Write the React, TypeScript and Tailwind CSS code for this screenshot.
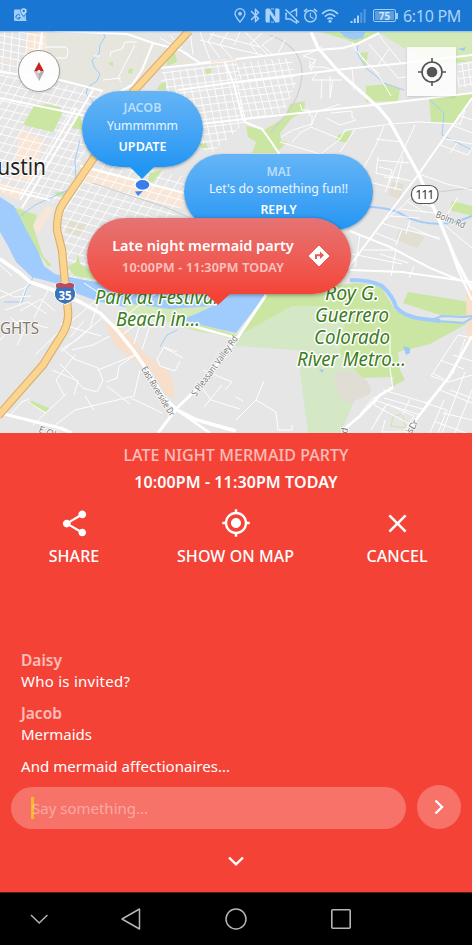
import type { ReactNode } from 'react';
import { MdBluetooth, MdAccessAlarm, MdShare, MdGpsFixed, MdClose } from 'react-icons/md';

type GridProps = {
  id: string;
  area: string;
  x: number;
  y: number;
  u: [number, number];
  v: [number, number];
  nu: number;
  nv: number;
  w?: number;
};

/* Street grid: two families of parallel roads clipped to a neighbourhood */
function StreetGrid({ id, area, x, y, u, v, nu, nv, w = 1 }: GridProps) {
  const lines: string[] = [];
  for (let i = 0; i <= nu; i++) lines.push(`M${x + u[0] * i} ${y + u[1] * i}l${v[0] * nv} ${v[1] * nv}`);
  for (let j = 0; j <= nv; j++) lines.push(`M${x + v[0] * j} ${y + v[1] * j}l${u[0] * nu} ${u[1] * nu}`);
  return (
    <g>
      <clipPath id={id}>
        <path d={area} />
      </clipPath>
      <path clipPath={`url(#${id})`} d={lines.join('')} stroke="#fff" strokeWidth={w} strokeOpacity=".9" fill="none" />
    </g>
  );
}

const PARKS = [
  'M23 125L35 104L43 105L46 104L60 107L63 112L53 132Z',
  'M71 128L79 112L84 130Z',
  'M160 84L166 82V90H157ZM167 60L175 52L177 62L167 66ZM205 69L211 68L212 73L206 74Z',
  'M108 63L113 62L113 67ZM128 70L133 68L132 74L128 73Z',
  'M320 32H378L372 36L356 44L345 39Z',
  'M388 32H472V61L441 64L420 55L404 46Z',
  'M366 86L387 84L400 89L398 101L366 102Z',
  'M429 99L463 93L472 92V98L454 123L431 122Z',
  'M360 53L368 52L366 66L364 65Z',
  'M246 126L264 130L284 118L290 104L305 101L304 112L292 118L280 133L281 141L287 142L276 153H252L256 142L248 137Z',
  'M338 135L352 130L347 143L336 140Z',
  'M13 207L37 215L33 226L43 256L52 266H48L38 252L26 229Z',
  'M78 253L76 262L67 267L75 276L110 282L80 264ZM55 192L67 191L64 196H56Z',
  'M28 403L32 401L49 408L46 413Z',
  'M150 173L163 169L153 182L147 181ZM200 144L206 143L208 148H201Z',
  'M452 201L472 206V216L450 210Z',
];

const MAJOR_ROADS = [
  'M42 32L39 50L41 78',
  'M55 31L127 34L153 43L180 50L200 63L236 59L316 50L343 48L357 44L379 33',
  'M153 43L142 70L132 85L112 96',
  'M161 68L236 60',
  'M0 72L60 80L103 91',
  'M93 90L72 125L22 208M76 108L50 152L20 200',
  'M178 90L236 82L353 68L406 63L472 55',
  'M225 62L234 85L243 120M200 124L236 120L373 105L472 93',
  'M472 98L418 175L369 240L345 272',
  'M0 98L48 108L86 116',
  'M243 120L247 123L262 129L270 140L280 155',
  'M0 188L50 200M80 166L184 193',
  'M350 231L390 247L430 268L472 285M350 270L402 272L472 282',
  'M450 248L458 270L472 300',
];

const MINOR_ROADS = [
  'M45 47H66Q70 52 66 58L52 58M137 42L125 42L122 49L111 52L110 57M100 56L94 56M135 45L122 70L118 78L121 82M103 80L121 78',
  'M200 32L210 60M214 32L208 42L220 58M228 32L220 45L232 58M240 32L234 45M200 40L240 50L262 55M210 34L260 47M245 32L268 55M262 33L250 44L258 54M275 36L262 45L272 54M285 40L278 53M160 38L190 55M170 35L182 48M190 32L193 55',
  'M322 46L315 51L303 56L316 60L309 67H323L333 70M310 61V69M315 61L311 71M318 72L312 80H342M322 79L321 99M333 79L330 98M352 68L354 90M362 58L379 74M352 42L355 49L379 76L391 96M369 44L398 78M379 35L402 64M389 49L378 65',
  'M398 78L406 77M330 76V98M300 104L302 110H309L310 116M281 137L293 130L312 124V115M292 142L300 133L311 127L340 139M311 126L317 112L340 104M331 113L352 111V117L356 120L340 125L326 118M280 142L320 154M321 154L340 139L345 130L391 124L418 122L461 124M355 130L340 152',
  'M384 126L376 145L360 175M415 125L404 149L385 192M376 139L402 142M378 160L409 163M384 177L400 178M378 157L376 173L411 181M369 182L402 190M403 157L395 190M379 167L392 170L388 185',
  'M461 114L452 125L472 133M453 124L440 145L468 155L472 148M446 139L472 144M457 143L450 153M465 110L460 125M458 115L472 120',
  'M381 223L403 206L411 197L422 194L430 201M390 216L420 218M400 209L435 213M418 194L424 206M411 198L432 207M407 201L425 213M381 223L402 229L440 238M402 229L396 245M376 233L398 242M410 220L406 234M419 174L447 184L472 190M458 197L447 215L441 222L472 248',
  'M364 250H396L391 276M380 254L408 263M408 226L440 240M360 235L355 267M352 254L402 264M409 278L414 266',
  'M177 352L164 347L157 359L160 366L175 371L180 361M203 370L232 382L225 390M165 348L183 358M222 385L204 407M203 389L211 400L240 409',
  'M84 283L102 295L60 331L35 355M100 296L90 328L61 352M105 315L77 340L60 350M110 336L93 345L72 350M62 348L74 359L98 368L103 380L97 392L83 388L72 376L60 364M98 370L135 355L119 366L117 378L106 382M75 355L56 380L64 395M52 370L78 381L74 395M28 402L46 413M67 393L33 425M0 340L20 320L48 328M10 317L25 330L17 345M20 311L41 299L55 311M0 298L26 287L30 281M5 310L28 302L47 314M27 285L19 305M48 290L34 318M0 265L12 276M0 290L14 297L31 296M84 321L70 337M60 324L101 336M115 325L145 300M141 321L134 344M150 325L142 350M120 336L150 315',
  'M140 370L134 396L75 410L54 426M131 398L162 413M85 396L94 410M10 415L22 402L29 399M107 386L130 404M256 400L276 412L278 430H292V425M264 381L256 400L236 420M236 397L243 401',
  'M390 340V369L393 389L379 396L373 398L360 414M374 400L420 415L429 400M383 390L427 403L451 373M384 398L426 410M380 393L374 405L415 427M386 405L371 430M410 399L402 415M376 421L387 404L414 416L404 432H382L385 420',
  'M472 338L458 335L431 376L448 382M440 360L464 369M453 355L472 361M434 374L444 379M440 390L472 403M425 403L447 410L438 433M450 390L472 398M444 400L430 433M465 339L453 374M472 375L448 382M472 420L443 413M465 372L442 433M472 390L455 433M436 422L466 433',
];

function CityMap() {
  return (
    <svg className="block h-full w-full" viewBox="0 31 472 402" preserveAspectRatio="none" fill="none">
      <rect x="0" y="31" width="472" height="402" fill="#e6e6e6" />
      <path d="M46 32H135L155 43L200 63L160 68L134 90L100 89L58 78L48 78Z" fill="#e6e6de" />
      <path d="M28 32H46L48 60L25 60ZM20 130L43 139L35 182L12 178ZM86 168L130 178L184 193L183 209L120 191L82 181ZM48 205L54 209L38 234L32 226ZM0 182L24 190L18 200L0 192Z" fill="#f8e6d6" />
      <path d="M68 220L88 225L82 237L66 232ZM392 182L404 184L400 200L388 195ZM400 227L425 237L417 248L396 240Z" fill="#e2dfd2" />

      <StreetGrid id="north" area="M0 32H44L50 80L0 72Z" x={-40} y={20} u={[7.5, 1.5]} v={[-0.5, 7]} nu={14} nv={12} />
      <StreetGrid id="downtown" area="M0 74L102 91L84 155L60 205L0 192Z" x={-20} y={45} u={[8.2, 1.9]} v={[-4.5, 7.4]} nu={26} nv={26} />
      <StreetGrid id="eastside" area="M96 160L190 178L184 205L110 285L68 280L58 230L60 214Z" x={60} y={135} u={[9, 2.4]} v={[-4.4, 7]} nu={19} nv={24} />
      <StreetGrid id="cherry" area="M162 72L236 62L246 122L210 155L160 105Z" x={152} y={52} u={[7.6, -0.9]} v={[1.6, 7.2]} nu={15} nv={16} />
      <StreetGrid id="mlk" area="M236 63L292 57L296 84L284 112L242 120Z" x={222} y={63} u={[7, -0.8]} v={[2, 7]} nu={13} nv={10} />
      <StreetGrid id="right" area="M458 64L472 60V86L457 88Z" x={455} y={58} u={[6, -1]} v={[1, 7]} nu={4} nv={6} />

      {PARKS.map((d) => (
        <path key={d} d={d} fill="#cbe6a3" />
      ))}
      <path d="M378 32L404 48L436 57L472 61V32Z" fill="#d3e9b8" />

      <path d="M236 337L266 293L355 283L380 285L395 310L410 318L470 322L430 344L398 352L400 370L405 380L391 387L394 377L360 378L345 365L330 358L300 350L260 345Z" fill="#cbe6a3" />
      <path d="M236 337L292 306L320 306L346 318L340 352L364 380L340 433H308L300 372L298 350L236 346Z" fill="#d5e8c5" />
      <path d="M335 374Q345 368 358 374Q374 384 370 394L350 403Q340 400 335 388Z" fill="#e0ddd4" />
      <path d="M408 292L458 300L472 303V316L440 315L403 303Z" fill="#cbe6a3" />
      <path d="M393 417L402 414L406 428L391 426Z" stroke="#cbe6a3" />
      <path d="M105 320Q125 325 141 350L160 366Q174 370 174 398L166 396L153 372L130 358L112 342Z" fill="#f8dfcb" />
      <path d="M466 290L472 288V345L467 340Z" fill="#f8dfcb" />

      <path d="M0 197L14 206L26 229L38 251L44 266L55 274L90 281L120 285L264 290L264 297L236 333L205 326L178 319L130 308L100 302L78 294L55 283L32 277L16 262L8 246L0 232Z" fill="#a0cbfd" />
      <path d="M125 303L170 309L213 306L196 314L178 321L210 333L198 332L165 321L128 312Z" fill="#d3e9b8" />
      <path d="M178 319L205 326L236 334V340L205 331L176 322Z" fill="#cbe6a3" />
      <g stroke="#a0cbfd" strokeLinejoin="round">
        <path d="M350 280Q371 280 382 286Q393 296 396 307Q404 317 424 319L440 321" strokeWidth="4" />
        <path d="M432 320L442 316L464 317L472 316M436 321L463 323L472 318" strokeWidth="2" />
        <path d="M369 207Q393 208 403 215Q418 224 442 224Q459 222 472 216" strokeWidth="2" />
        <path d="M103 32L105 37L100 45L99 54L92 60L94 67L100 74L97 81L88 87L86 94L92 100L95 108" />
        <path d="M80 140L75 160L76 180L68 190L35 205L18 218M177 330L167 335L160 347M33 275L31 284L27 287L22 302H4" />
        <path d="M358 45L357 53L366 68L376 76L384 83L404 90M430 100L444 113L442 135L472 150" />
      </g>
      <path d="M340 32H365L363 38L354 40L345 37ZM458 49L466 47L464 51ZM403 346L410 348V353L406 355ZM319 369L324 370L322 373Z" fill="#9fc9f5" />
      <path d="M270 35Q304 48 302 76Q300 97 286 115L270 133M92 183L165 207L200 222M420 194L472 188" stroke="#cfcfcf" strokeWidth="1.2" />

      {MINOR_ROADS.map((d) => (
        <path key={d} d={d} stroke="#fff" strokeWidth="1" />
      ))}
      {MAJOR_ROADS.map((d) => (
        <path key={d} d={d} stroke="#fff" strokeWidth="2" strokeLinejoin="round" />
      ))}
      <path d="M211 62L236 59M0 60L14 62" stroke="#f9e5d2" strokeWidth="2" />
      <g stroke="#fff" strokeLinejoin="round">
        <path d="M311 32L318 48L339 72L379 108L389 120L418 173L436 213L456 260L472 290" strokeWidth="3.2" />
        <path d="M0 259L20 273L30 282L53 290L80 302L100 313L117 330L133 350L147 370L163 397L177 410L197 420L236 431" strokeWidth="3.6" />
        <path d="M266 295L236 340L203 383L177 408L158 433M0 413L60 428L72 433" strokeWidth="3" />
        <path d="M186 324L236 338M472 336L449 377L418 417L406 433M393 387L379 396L360 416L343 430M177 410L210 433" strokeWidth="2.6" />
      </g>
      <path d="M189 31L133 92L93 159L62 205Q57 213 57 230L62 250L65 283L68 311Q69 322 63 333L43 365L-2 416" stroke="#d9ad72" strokeWidth="8.4" />
      <path d="M189 31L133 92L93 159L62 205Q57 213 57 230L62 250L65 283L68 311Q69 322 63 333L43 365L-2 416" stroke="#fbd48e" strokeWidth="6.2" />

      <g fontFamily="'Noto Sans', sans-serif" paintOrder="stroke" stroke="#fff" strokeLinejoin="round">
        <text x="-16" y="175" fontSize="24" textLength="62" lengthAdjust="spacingAndGlyphs" strokeWidth="2" fill="#222">Austin</text>
        <text x="0" y="333.5" fontSize="16.5" textLength="39" lengthAdjust="spacingAndGlyphs" strokeWidth="1.5" fill="#82766b">GHTS</text>
        <g fontSize="19" fontStyle="italic" fill="#3b7d20" strokeWidth="3">
          <text x="95" y="303.5" textLength="123" lengthAdjust="spacingAndGlyphs">Park at Festival</text>
          <text x="116" y="325.5" textLength="84" lengthAdjust="spacingAndGlyphs">Beach in...</text>
          <text x="325" y="300" textLength="54" lengthAdjust="spacingAndGlyphs">Roy G.</text>
          <text x="315" y="322" textLength="74" lengthAdjust="spacingAndGlyphs">Guerrero</text>
          <text x="314" y="344" textLength="76" lengthAdjust="spacingAndGlyphs">Colorado</text>
          <text x="297" y="366" textLength="109" lengthAdjust="spacingAndGlyphs">River Metro...</text>
        </g>
        <g fontSize="9.5" fill="#777" strokeWidth="1.5">
          <text transform="translate(141 369) rotate(59)" textLength="56" lengthAdjust="spacingAndGlyphs">East Riverside Dr</text>
          <text transform="translate(196 397) rotate(-54)" textLength="72" lengthAdjust="spacingAndGlyphs">S Pleasant Valley Rd</text>
          <text transform="translate(435 217) rotate(22)" textLength="31" lengthAdjust="spacingAndGlyphs">Bolm Rd</text>
          <text transform="translate(38 432) rotate(20)">E Oltorf St</text>
          <text transform="translate(347 434) rotate(-80)" textLength="7">d</text>
          <text transform="translate(411 435) rotate(-58)" textLength="15">is Dr</text>
        </g>
      </g>
      <rect x="411.5" y="185.5" width="26.5" height="18" rx="8" fill="#fff" stroke="#555" strokeWidth="1.2" />
      <text x="424.8" y="199" fontSize="12.5" textAnchor="middle" textLength="19" fontFamily="'Noto Sans', sans-serif" fill="#333">111</text>
      <path d="M56 284L60 282.5L65 284L70 282.5L74 284Q73 288 75.5 292Q77 301 65 304.5Q53 301 54.5 292Q57 288 56 284Z" fill="#3b72b8" stroke="#fff" />
      <path d="M56 284L60 282.5L65 284L70 282.5L74 284L74 287.5H56Z" fill="#c04a5a" />
      <text x="65" y="299.5" fontSize="11.5" fontWeight="700" textAnchor="middle" fontFamily="'Noto Sans', sans-serif" fill="#fff">35</text>
    </svg>
  );
}

function StatusBar() {
  return (
    <header className="flex h-[31px] shrink-0 items-center bg-[#1976d2] pr-[12px] pl-[14px] text-[#a9d3f8]">
      <svg className="mb-px size-[14px]" viewBox="0 0 14 14">
        <path d="M1 1.5H7Q6 5 9 8L12.5 12V13H1Q0 13 0 12V2.5Q0 1.5 1 1.5Z" fill="#9fcdf5" />
        <path d="M10 9L12 6V12Z" fill="#9fcdf5" />
        <path d="M9.7 0C11.7 0 13 1.3 13 3C13 5 9.7 8 9.7 8S6.5 5 6.5 3C6.5 1.3 7.8 0 9.7 0Z" fill="#b9dcf8" stroke="#1976d2" strokeWidth=".6" />
        <circle cx="9.7" cy="3" r="1.2" fill="#1976d2" />
        <path d="M6 7.5A2.2 2.2 0 1 0 6.3 9.5H4.5" fill="none" stroke="#1976d2" />
      </svg>
      <div className="ml-auto flex items-center">
        <svg className="h-[15px] w-[12px]" viewBox="0 0 12 15" fill="none" stroke="currentColor" strokeWidth="1.3">
          <path d="M6 14C3 10.5 1 8.2 1 5.7A5 5 0 0 1 11 5.7C11 8.2 9 10.5 6 14Z" />
          <circle cx="6" cy="5.7" r="1.2" fill="currentColor" />
        </svg>
        <MdBluetooth className="ml-px size-[17px]" />
        <svg className="ml-px h-[15px] w-[15px]" viewBox="0 0 15 15">
          <path d="M2 .5H4.6L10.2 9V.5H13Q14.5 .5 14.5 2V13Q14.5 14.5 13 14.5H10.4L4.8 6V14.5H2Q.5 14.5 .5 13V2Q.5 .5 2 .5Z" fill="currentColor" />
          <path d="M6 1H9M6 14H9" stroke="currentColor" />
          <path d="M7.5 1.5V4M7.5 11V13.5" stroke="#1976d2" />
        </svg>
        <svg className="ml-[4px] h-[16px] w-[16px]" viewBox="0 0 16 16" fill="none" stroke="currentColor" strokeWidth="1.4">
          <path d="M6.5 4.5L12.5 1V8.5M12.5 12.5V15L6 11H2V5.5H3M1.5 1.5L15 14.5" />
        </svg>
        <MdAccessAlarm className="ml-[2px] size-[17px]" />
        <svg className="ml-[2px] h-[14px] w-[18px]" viewBox="0 0 18 14" fill="none" stroke="currentColor" strokeWidth="1.6">
          <path d="M1 4.8Q9 -2.8 17 4.8M3.8 7.6Q9 2.8 14.2 7.6M6.4 10.2Q9 8 11.6 10.2" />
          <circle cx="9" cy="12.3" r="1.5" fill="currentColor" stroke="none" />
        </svg>
        <svg className="ml-[11px] h-[14px] w-[16px]" viewBox="0 0 16 14" stroke="currentColor" strokeWidth="2">
          <path d="M1.5 14V12M4.8 14V9.5M8 14V6.5" />
          <path d="M11.3 14V3.5M14.6 14V0" opacity=".4" />
        </svg>
        <div className="ml-[7px] flex h-[13px] w-[23px] items-center justify-center rounded-[2px] border border-[#9fcdf5] p-px">
          <div className="flex h-full w-full items-center justify-center bg-[#5b9fe0] text-[10px] font-semibold leading-none text-[#d5eafc]">75</div>
        </div>
        <span className="h-[6px] w-[2px] bg-[#9fcdf5]" />
        <span className="ml-[5px] w-[57px] whitespace-nowrap text-[16px] leading-none tracking-[-0.3px]">6:10 PM</span>
      </div>
    </header>
  );
}

function Tail({ className, color }: { className: string; color: string }) {
  return (
    <svg className={className} viewBox="0 0 24 12" preserveAspectRatio="none">
      <path d="M0 0H24L12 12Z" fill={color} />
    </svg>
  );
}

function Action({ icon, label, className }: { icon: ReactNode; label: string; className: string }) {
  return (
    <button className={`flex flex-col items-center ${className}`}>
      <span className="flex h-[30px] items-center">{icon}</span>
      <span className="mt-[7px] whitespace-nowrap text-[16px] font-medium leading-[22px] tracking-[0.05px]">{label}</span>
    </button>
  );
}

export default function App() {
  return (
    <div className="flex h-[945px] w-[472px] flex-col overflow-hidden bg-[#f44336] font-['Noto_Sans',sans-serif] text-white">
      <StatusBar />
      <main className="relative h-[402px] shrink-0 overflow-hidden">
        <CityMap />
        <div className="absolute top-0 left-0 h-[2px] w-full bg-gradient-to-b from-[#1976d2]/40 to-transparent" />

        <button className="absolute top-[19px] left-[18px] flex size-[42px] items-center justify-center rounded-full border border-[#999] bg-white/90 shadow-sm">
          <svg className="h-[19px] w-[10px]" viewBox="0 0 12 20" preserveAspectRatio="none">
            <path d="M6 0L12 10H0Z" fill="#c9201d" />
            <path d="M0 10H12L6 20Z" fill="#c8c8c8" />
            <path d="M6 10H12L6 20Z" fill="#b0b0b0" />
            <circle cx="6" cy="10" r="1.8" fill="#eee" />
          </svg>
        </button>
        <button className="absolute top-[16px] left-[407px] flex size-[49px] items-center justify-center bg-white/85 text-[#555] shadow">
          <svg className="size-[28px]" viewBox="0 0 28 28" fill="none" stroke="currentColor" strokeWidth="1.6">
            <circle cx="14" cy="14" r="10" />
            <circle cx="14" cy="14" r="5.3" fill="currentColor" stroke="none" />
            <path d="M14 0V5M14 23V28M0 14H5M23 14H28" />
          </svg>
        </button>

        <svg className="absolute top-[148px] left-[134px] h-[17px] w-[17px]" viewBox="0 0 17 17">
          <path d="M1 12.5L9 12L4 17Z" fill="#4285f4" />
          <ellipse cx="8.5" cy="5.8" rx="7.5" ry="5.5" fill="#3b7ced" stroke="#fff" strokeWidth="1.3" />
        </svg>
        <div className="absolute top-[60px] left-[82px] flex h-[76px] w-[121px] flex-col items-center rounded-[38px] bg-gradient-to-b from-[#64b5f6] to-[#2196f3] pt-[8px] shadow-[0_1px_3px_rgba(0,0,0,0.35)]">
          <span className="text-[12.5px] font-semibold leading-[18px] text-white/60">JACOB</span>
          <span className="text-[12.2px] leading-[18px] text-white/90">Yummmmm</span>
          <span className="mt-[3px] text-[12.5px] font-semibold leading-[18px] tracking-[0.1px]">UPDATE</span>
          <Tail className="absolute top-[75.5px] left-[48px] h-[12px] w-[24px]" color="#2196f3" />
        </div>

        <div className="absolute top-[123px] left-[184px] flex h-[76px] w-[189px] flex-col items-center rounded-[38px] bg-gradient-to-b from-[#64b5f6] to-[#2196f3] pt-[9px] shadow-[0_1px_3px_rgba(0,0,0,0.35)]">
          <span className="text-[12.2px] font-semibold leading-[17px] text-white/60">MAI</span>
          <span className="whitespace-nowrap text-[12.3px] leading-[18px] text-white/90">Let's do something fun!!</span>
          <span className="mt-[3px] text-[12.3px] font-semibold leading-[18px]">REPLY</span>
        </div>

        <div className="absolute top-[187px] left-[87px] flex h-[76px] w-[264px] items-center rounded-[38px] bg-gradient-to-b from-[#e57373] to-[#f44336] pl-[25px] shadow-[0_1px_4px_rgba(0,0,0,0.4)]">
          <div className="flex w-[182px] flex-col items-center whitespace-nowrap pt-px">
            <span className="text-[14.5px] font-semibold leading-[20px]">Late night mermaid party</span>
            <span className="mt-[3px] text-[12.5px] font-semibold leading-[20px] tracking-[0.2px] text-white/65">10:00PM - 11:30PM TODAY</span>
          </div>
          <svg className="ml-[14px] size-[22px]" viewBox="0 0 22 22">
            <path d="M11 1L21 11L11 21L1 11Z" fill="#fff" stroke="#fff" strokeLinejoin="round" />
            <path d="M7 14V9.3H12V6.5L16 10.3L12 14V11.3H9V14Z" fill="#ea5a52" />
          </svg>
          <Tail className="absolute top-[75.5px] left-[119px] h-[11px] w-[24px]" color="#f44336" />
        </div>
      </main>

      <section className="flex h-[459px] shrink-0 flex-col bg-[#f44336] pt-[11px] shadow-[0_-1px_3px_rgba(0,0,0,0.25)]">
        <h1 className="text-center text-[16px] font-medium leading-[22px] tracking-[0.08px] text-white/65">LATE NIGHT MERMAID PARTY</h1>
        <p className="mt-[5px] text-center text-[16px] font-semibold leading-[22px] tracking-[0.1px]">10:00PM - 11:30PM TODAY</p>
        <div className="mt-[15px] flex">
          <Action className="w-[148px]" icon={<MdShare className="size-[31px]" />} label="SHARE" />
          <Action className="w-[175px]" icon={<MdGpsFixed className="size-[30px]" />} label="SHOW ON MAP" />
          <Action className="w-[148px]" icon={<MdClose className="size-[31px]" />} label="CANCEL" />
        </div>
        <div className="mt-[83px] flex flex-col px-[21px] text-[15px] leading-[21px]">
          <span className="text-[15.5px] font-semibold text-white/65">Daisy</span>
          <span className="tracking-[0.25px]">Who is invited?</span>
          <span className="mt-[11px] text-[15.5px] font-semibold text-white/65">Jacob</span>
          <span>Mermaids</span>
          <span className="mt-[11px] tracking-[0.04px]">And mermaid affectionaires...</span>
        </div>
        <div className="mt-[8px] flex items-start justify-between px-[11px]">
          <div className="mt-[2px] flex h-[42px] w-[395px] items-center rounded-full bg-white/25 pl-[20px]">
            <span className="h-[22px] w-[3px] bg-[#fbb829]" />
            <span className="-ml-[2px] text-[15px] text-white/40">Say something...</span>
          </div>
          <button className="flex size-[44px] items-center justify-center rounded-full bg-white/25">
            <svg className="size-[16px]" viewBox="0 0 16 16" fill="none" stroke="currentColor" strokeWidth="2.4">
              <path d="M4.5 1.5L11 8L4.5 14.5" />
            </svg>
          </button>
        </div>
        <svg className="mx-auto mt-[24px] h-[16px] w-[16px]" viewBox="0 0 16 16" fill="none" stroke="currentColor" strokeWidth="2.4">
          <path d="M1 4.5L8 11.3L15 4.5" />
        </svg>
      </section>

      <nav className="flex h-[53px] shrink-0 items-center border-t border-[#5a1a15] bg-black pl-[29px] text-[#b5b5b5]">
        <svg className="h-[20px] w-[20px]" viewBox="0 0 20 20" fill="none" stroke="currentColor" strokeWidth="1.5">
          <path d="M2 6L10.2 14L18.4 6" />
        </svg>
        <svg className="ml-[72px] h-[22px] w-[22px]" viewBox="0 0 22 22" fill="none" stroke="currentColor" strokeWidth="1.5" strokeLinejoin="round">
          <path d="M18.5 1V21L1 11Z" />
        </svg>
        <svg className="ml-[82px] h-[22px] w-[22px]" viewBox="0 0 22 22" fill="none" stroke="currentColor" strokeWidth="1.5">
          <circle cx="11" cy="11" r="10" />
        </svg>
        <svg className="ml-[83px] h-[22px] w-[22px]" viewBox="0 0 22 22" fill="none" stroke="currentColor" strokeWidth="1.6">
          <rect x="1.8" y="1.8" width="18.4" height="18.4" rx="1" />
        </svg>
      </nav>
    </div>
  );
}
